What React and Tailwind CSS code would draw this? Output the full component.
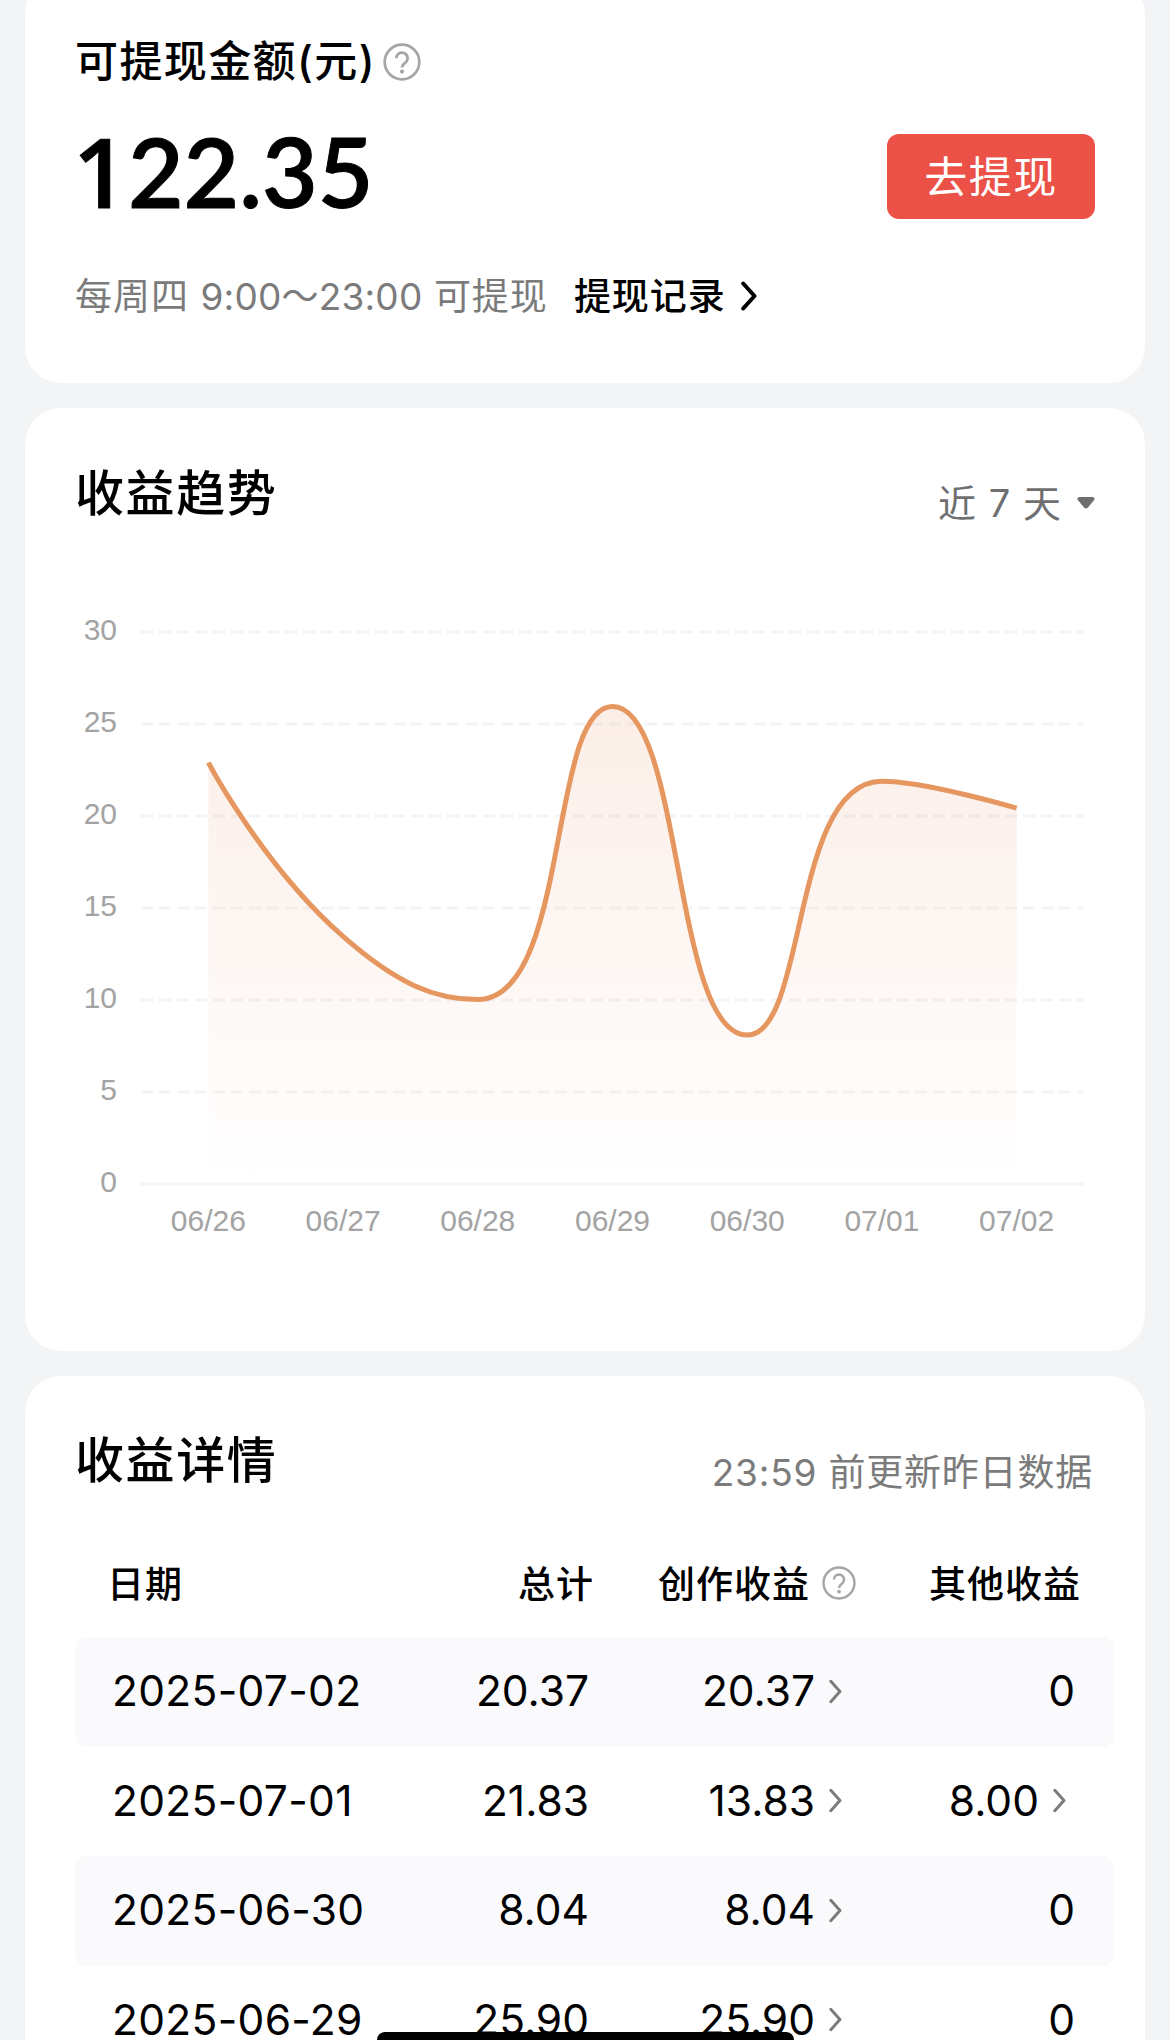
import clsx from 'clsx'

const TREND = [
  { date: '06/26', value: 22.85 },
  { date: '06/27', value: 13.4 },
  { date: '06/28', value: 9.97 },
  { date: '06/29', value: 25.9 },
  { date: '06/30', value: 8.04 },
  { date: '07/01', value: 21.83 },
  { date: '07/02', value: 20.37 },
]

const ROWS = [
  { date: '2025-07-02', total: '20.37', creation: '20.37', other: '0' },
  { date: '2025-07-01', total: '21.83', creation: '13.83', other: '8.00' },
  { date: '2025-06-30', total: '8.04', creation: '8.04', other: '0' },
  { date: '2025-06-29', total: '25.90', creation: '25.90', other: '0' },
]

const TICKS = [30, 25, 20, 15, 10, 5, 0]

const PLOT = { left: 116, right: 1059, top: 52, bottom: 604 }

const clamp = (v, a, b) => Math.max(Math.min(a, b), Math.min(Math.max(a, b), v))

const yOf = (value) => PLOT.bottom - (value / 30) * (PLOT.bottom - PLOT.top)

// Smooth path through all points. Control points are kept inside the box of
// their own segment so the curve never overshoots a data point.
function smoothPath(pts, smooth = 0.5) {
  let d = `M${pts[0].x} ${pts[0].y}`
  let cp0 = pts[0]
  for (let i = 1; i < pts.length; i++) {
    const prev = pts[i - 1]
    const p = pts[i]
    const next = pts[i + 1]
    let cp1 = p
    let nextCp0 = p
    if (next) {
      const lenPrev = Math.hypot(p.x - prev.x, p.y - prev.y)
      const lenNext = Math.hypot(next.x - p.x, next.y - p.y)
      const ratio = lenNext / (lenNext + lenPrev)
      const ax = clamp(p.x + (next.x - prev.x) * smooth * ratio, p.x, next.x)
      const ay = clamp(p.y + (next.y - prev.y) * smooth * ratio, p.y, next.y)
      cp1 = {
        x: clamp(p.x - ((ax - p.x) * lenPrev) / lenNext, prev.x, p.x),
        y: clamp(p.y - ((ay - p.y) * lenPrev) / lenNext, prev.y, p.y),
      }
      nextCp0 = {
        x: p.x + ((p.x - cp1.x) * lenNext) / lenPrev,
        y: p.y + ((p.y - cp1.y) * lenNext) / lenPrev,
      }
    }
    d += ` C${cp0.x} ${cp0.y} ${cp1.x} ${cp1.y} ${p.x} ${p.y}`
    cp0 = nextCp0
  }
  return d
}

function HelpIcon({ className }) {
  return (
    <svg viewBox="0 0 38 38" fill="none" stroke="#a6a6a6" strokeWidth="2.7" className={className}>
      <circle cx="19" cy="19" r="17.3" />
      <path d="M13.4 15.2a5.6 5.6 0 1 1 8.9 4.5c-2 1.5-3.3 2.4-3.3 4.9" />
      <circle cx="19" cy="28.6" r="2.1" fill="#a6a6a6" stroke="none" />
    </svg>
  )
}

function Chevron({ className, strokeWidth = 3.6 }) {
  return (
    <svg viewBox="0 0 16 30" fill="none" stroke="currentColor" strokeWidth={strokeWidth} strokeLinecap="round" strokeLinejoin="round" className={className}>
      <path d="M2.2 2.5 13.5 15 2.2 27.5" />
    </svg>
  )
}

function TrendChart() {
  const step = (PLOT.right - PLOT.left) / TREND.length
  const pts = TREND.map((t, i) => ({ x: PLOT.left + step * (i + 0.5), y: yOf(t.value) - 1 }))
  const line = smoothPath(pts)
  const area = `${line} L${pts[pts.length - 1].x} ${PLOT.bottom} L${pts[0].x} ${PLOT.bottom} Z`

  return (
    <svg viewBox="0 0 1120 700" width="1120" height="700" className="block font-['Liberation_Sans',sans-serif]">
      <defs>
        <linearGradient id="trend-area" x1="0" y1="0" x2="0" y2="1">
          <stop offset="0" stopColor="#e88f60" stopOpacity="0.15" />
          <stop offset="1" stopColor="#e88f60" stopOpacity="0" />
        </linearGradient>
      </defs>
      {TICKS.map((t) => (
        <g key={t}>
          <line x1={PLOT.left} x2={PLOT.right} y1={yOf(t)} y2={yOf(t)} stroke="#f4f4f5" strokeWidth="3" strokeDasharray={t === 0 ? undefined : '12 6'} />
          <text x="92" y={yOf(t) + 8} textAnchor="end" fontSize="30" fill="#a3a3a3">{t}</text>
        </g>
      ))}
      <path d={area} fill="url(#trend-area)" />
      <path d={line} fill="none" stroke="#e6965f" strokeWidth="5" strokeLinejoin="bevel" />
      {TREND.map((t, i) => (
        <text key={t.date} x={pts[i].x} y="651" textAnchor="middle" fontSize="30" fill="#a3a3a3">{t.date}</text>
      ))}
    </svg>
  )
}

function BalanceCard() {
  return (
    <section className="-mt-[22px] h-[405px] shrink-0 rounded-[36px] bg-white px-[50px] pt-[22px]">
      <div className="flex h-[120px] items-center gap-[7px]">
        <h2 className="pt-[3px] text-[43px] leading-none font-medium tracking-[1.4px]">可提现金额(元)</h2>
        <HelpIcon className="mt-1 size-[38px]" />
      </div>
      <div className="flex h-[112px] items-center justify-between">
        <p className="-ml-[2px] pb-[10px] font-['Lato',sans-serif] text-[96px] leading-none font-semibold [-webkit-text-stroke:1px_#000]">
          <span className="font-['Open_Sans',sans-serif]">1</span>22.35
        </p>
        <button className="h-[85px] w-[208px] rounded-[12px] bg-[#eb5146] pt-[3px] text-[43px] leading-none tracking-[1.5px] text-white">去提现</button>
      </div>
      <div className="flex h-[128px] items-center text-[37px] leading-none">
        <span className="tracking-[1px] text-[#7b7b7b]">
          每周四 <span className="tracking-[0.2px]">9:00～23:00</span> 可提现
        </span>
        <a className="ml-[26px] flex items-center gap-[15px] font-medium tracking-[1px]">
          提现记录
          <Chevron strokeWidth={4} className="h-[30px] w-4" />
        </a>
      </div>
    </section>
  )
}

function TrendCard() {
  return (
    <section className="h-[943px] shrink-0 rounded-[36px] bg-white">
      <div className="flex h-[172px] items-start justify-between px-[50px] pt-[58px]">
        <h2 className="mt-[3px] text-[49px] leading-none font-medium tracking-[1.6px]">收益趋势</h2>
        <button className="mt-[18px] flex items-center gap-[15px] text-[38px] leading-none tracking-[1px] text-[#6f6f6f]">
          近 7 天
          <svg viewBox="0 0 18 12" className="h-3 w-[18px] fill-current">
            <path d="M2.5 0h13c1.8 0 2.7 2 1.5 3.3l-6.3 7.5c-.9 1-2.5 1-3.4 0L1 3.3C-.2 2 .7 0 2.5 0Z" />
          </svg>
        </button>
      </div>
      <TrendChart />
    </section>
  )
}

function DetailCard() {
  return (
    <section className="h-[700px] shrink-0 rounded-t-[36px] bg-white pt-[57px] pl-[50px]">
      <div className="flex h-[92px] items-start justify-between pr-[52px]">
        <h2 className="mt-[3px] text-[49px] leading-none font-medium tracking-[1.6px]">收益详情</h2>
        <p className="mt-[21px] text-[37px] leading-none tracking-[0.8px] text-[#7b7b7b]">23:59 前更新昨日数据</p>
      </div>
      <table className="w-[1039px] table-fixed border-separate border-spacing-0">
        <thead>
          <tr className="h-[112px] text-[37px] leading-none tracking-[1px]">
            <th className="w-[300px] pt-[7px] pl-[32px] text-left font-medium">日期</th>
            <th className="w-[219px] pt-[7px] text-right font-medium">总计</th>
            <th className="w-[264px] pt-[7px] pr-[2px] font-medium">
              <span className="flex items-center justify-end gap-[12px]">
                创作收益
                <HelpIcon className="-mt-1 size-[34px]" />
              </span>
            </th>
            <th className="w-[256px] pt-[7px] pr-[33px] text-right font-medium">其他收益</th>
          </tr>
        </thead>
        <tbody>
          {ROWS.map((r, i) => (
            <tr key={r.date} className={clsx('h-[109.5px] text-[42.5px] leading-none', i % 2 === 0 && 'bg-[#fafafc]')}>
              <td className="rounded-l-[12px] pb-px pl-[37px] tracking-[0.3px]">{r.date}</td>
              <td className="pr-[5px] pb-px text-right">{r.total}</td>
              <td className="pr-[16px] pb-px">
                <span className="flex items-center justify-end gap-[14px]">
                  {r.creation}
                  <Chevron className="h-[25px] w-[13px] text-[#7b7b7b]" />
                </span>
              </td>
              <td className={clsx('rounded-r-[12px] pb-px', r.other === '0' ? 'pr-[39px]' : 'pr-[48px]')}>
                <span className="flex items-center justify-end gap-[14px]">
                  {r.other}
                  {r.other !== '0' && <Chevron className="h-[25px] w-[13px] text-[#7b7b7b]" />}
                </span>
              </td>
            </tr>
          ))}
        </tbody>
      </table>
    </section>
  )
}

export default function App() {
  return (
    <main className="relative flex h-[2040px] w-[1170px] flex-col gap-[25px] overflow-hidden bg-[#f3f4f6] px-[25px] font-['Inter','Noto_Sans_CJK_SC',sans-serif] text-black">
      <BalanceCard />
      <TrendCard />
      <DetailCard />
      <div className="absolute bottom-[-8px] left-[377px] h-4 w-[417px] rounded-full bg-black" />
    </main>
  )
}
